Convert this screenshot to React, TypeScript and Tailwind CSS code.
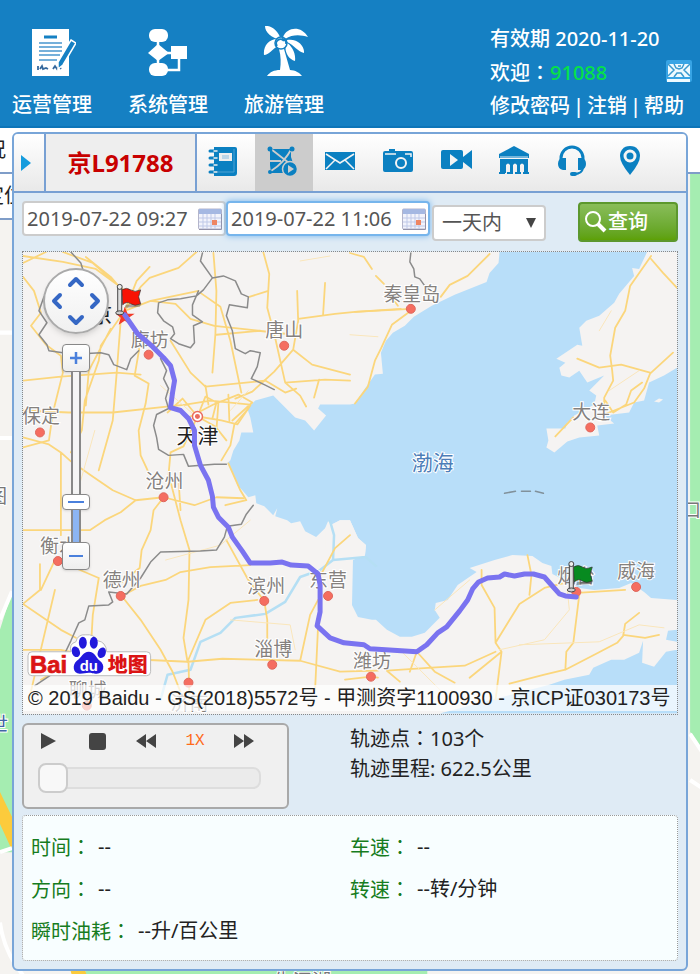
import { useState, type ReactNode } from "react";
import { ChevronDown, ChevronLeft, ChevronRight, ChevronUp } from "lucide-react";

interface City {
    name: string;
    x: number;
    y: number;
    dotX: number;
    dotY: number;
}

const CITIES: City[] = [
    { name: "秦皇岛", x: 412, y: 300, dotX: 411, dotY: 308 },
    { name: "唐山", x: 284, y: 336, dotX: 284, dotY: 345 },
    { name: "廊坊", x: 149, y: 346, dotX: 148, dotY: 354 },
    { name: "保定", x: 40, y: 423, dotX: 39, dotY: 432 },
    { name: "大连", x: 592, y: 419, dotX: 591, dotY: 427 },
    { name: "沧州", x: 164, y: 488, dotX: 163, dotY: 497 },
    { name: "衡水", x: 58, y: 553, dotX: 57, dotY: 561 },
    { name: "德州", x: 121, y: 587, dotX: 120, dotY: 596 },
    { name: "滨州", x: 266, y: 593, dotX: 264, dotY: 601 },
    { name: "东营", x: 328, y: 587, dotX: 328, dotY: 596 },
    { name: "淄博", x: 273, y: 656, dotX: 272, dotY: 665 },
    { name: "潍坊", x: 372, y: 668, dotX: 371, dotY: 677 },
    { name: "烟台", x: 577, y: 583, dotX: 577, dotY: 592 },
    { name: "威海", x: 637, y: 578, dotX: 637, dotY: 587 },
    { name: "聊城", x: 87, y: 697, dotX: 86, dotY: 706 },
    { name: "济南", x: 189, y: 710, dotX: 188, dotY: 683 },
];

const ROADS = [
    "M22 262L45 251M22 255L62 261L95 268L118 285M85 256L110 276L122 290M62 251L92 262L124 290M196 251L178 267L149 277L140 286L124 310",
    "M124 310L136 280L149 266M124 310L150 300L198 290M150 300L175 303L190 318L214 325L285 333M124 310L110 330L100 345L98 360L84 400L81 430L70 452M110 328L88 370L85 405M120 320L116 372L112 420L98 470",
    "M22 276L33 290L40 312L30 325L45 344L60 355L62 372L52 412L48 440L22 447M22 380L60 376L116 372L140 374M22 410L68 412L112 412L166 406L186 404",
    "M140 340L134 375L148 383L145 403L138 430L140 455L147 470M170 340L190 372L205 386L265 380L285 392L296 388M213 252L216 290L215 333L212 372M200 292L220 306L230 340L241 392",
    "M263 251L269 273L267 307L274 333L285 382M297 290L298 320L293 349L274 371L252 391L235 398M293 349L312 364L350 374M325 282L323 314M298 318L335 313L355 311L401 308M216 334L260 330M285 382L300 395L306 406M285 382L325 379L350 380M319 379L314 397M249 296L268 290",
    "M185 404L210 400L250 404M186 418L213 404L238 394L252 402L232 420M197 416L205 396L216 402L212 418M197 416L182 398L167 412M197 416L221 420L237 424L250 405M197 416L183 446L170 452L168 474L180 520L189 550L188 600L183 638L187 662M197 416L215 426L226 440M205 385L208 404M218 402L216 430M228 394L229 420",
    "M22 437L48 444L60 452L70 461L90 475L112 490L135 500L120 512L104 520L89 530L22 530M60 452L60 535M135 500L163 497L194 505L216 497L243 498M163 497L153 510L150 530L141 550L139 568L121 582M178 480L180 510",
    "M248 408L234 424L230 445L221 460M228 463L240 490L246 500L225 505M40 590L54 560L65 564L98 578M39 564L39 590L22 604M54 590L28 700M22 604L60 630L75 638M98 578L92 615L90 650L40 680",
    "M121 596L140 586L165 580L180 572L210 567L250 565M121 596L140 620L160 650L172 672L183 700M187 662L205 620L230 603L257 600M187 662L222 659L300 661L340 672L378 671M22 650L60 650L100 658L187 662M188 662L189 700M264 601L267 620L267 640M264 601L248 580L226 540M300 661L310 615L318 600",
    "M350 252L364 256L372 268M376 275L384 283M318 580L335 548L350 535M355 403L368 386L375 360L381 348L392 324L411 310M386 288L398 305M355 311L411 308M441 296L450 284L468 275L490 253",
    "M652 255L631 285L626 310L616 327L611 355L613 370L614 380L605 397L605 414L635 402L645 388L651 373L674 352M578 358L600 367L622 364L651 372M652 258L664 272L678 287M574 417L556 436M606 400L614 412L627 404L632 390L643 382",
    "M482 570L482 585L495 608L496 643L502 652L496 700M528 555L532 575L530 595M578 593L626 590M496 643L520 604L545 588L578 580M580 595L574 643L567 652L566 670M496 652L465 666L432 668L387 671L400 682M417 652L435 672L455 683M417 652L410 672M502 652L470 678M566 670L597 654L618 643L624 636L626 624L640 613M624 635L646 638L660 635M510 684L545 675L566 670M318 626L315 690M378 678L371 677L345 680",
];

const TRACK = "M124 314L137 333L152 346L163 357L170 365L174 380L172 392L170 407L180 410L188 418L194 430L194 445L200 465L208 480L212 496L213 507L218 517L228 527L232 537L242 551L250 563L270 563L282 562L291 565L308 566L318 574L320 585L320 612L317 626L330 638L344 643L364 645L370 649L417 652L427 645L438 633L447 627L460 611L468 600L473 589L479 582L488 578L500 577L505 574L515 576L525 574L534 574L545 577L553 586L560 594L566 596L577 597";

const BORDERS = "M70 251L80 262L84 275M202 252L200 260L212 277L203 289L196 295L180 298L167 299L158 302L157 312L163 320L172 326L174 333L170 338L178 343L190 347L194 342L193 325L202 321L192 314L192 304L198 290M212 277L223 275L235 280L241 293L248 296L247 307L229 304L226 315L232 330L235 348L245 353L250 350L260 352L257 366L251 378L264 384L274 389M43 296L38 310L46 322L38 334L46 344L48 350L62 352L82 353L100 352L108 354L113 364L126 369L130 358L138 350M160 358L166 370L163 378L168 388L165 398L168 408L156 414L153 425L156 437L158 449L168 455L183 454L188 466L214 464L226 464M411 252L410 261L414 268L415 276L420 278L425 285M34 686L55 672L70 641L78 623L84 620L88 606L108 605L112 602L108 592L126 594L140 578L150 562L160 552L200 551L216 550L224 537L227 526L241 524L246 514L253 505";

function Colon() {
    return <span className="font-['Noto_Sans_CJK_TC',sans-serif]">：</span>;
}

function Flag({ x, y, color }: { x: number; y: number; color: string }) {
    return (
        <g transform={`translate(${x} ${y})`}>
            <path d="M7 21L22 20L24 17L8 18Z" fill="#555" opacity="0.5" />
            <path d="M4 3Q9 0 13 3T23 3L21 10L23 17Q17 20 13 17T5 18Z" fill={color} stroke="#333" strokeWidth="0.7" />
            <path d="M0 1h4v25h-4z" fill="#ddd" stroke="#444" />
            <circle cx="2" cy="0" r="2.5" fill="#eee" stroke="#444" />
            <ellipse cx="2" cy="26" rx="4" ry="2" fill="#ccc" stroke="#444" />
        </g>
    );
}

function RouteMap() {
    return (
        <svg viewBox="22 251 656 463" className="block h-auto w-full bg-[#f5f3f2]" role="img" aria-label="轨迹地图">
            {/* Sea */}
            <path
                fill="#b8def9"
                d="M500 251L499 262L490 272L487 281L455 294L432 305L414 316L405 325L393 332L386 340L381 352L383 373L375 374L363 391L355 403L350 404L320 404L318 408L326 415L314 430L305 420L295 417L283 405L273 395L255 400L247 408L250 417L253 432L241 432L239 440L233 450L230 460L227 463L233 475L237 485L242 490L248 497L255 495L256 503L264 506L273 515L277 508L275 516L287 520L291 523L300 521L305 531L316 537L325 528L328 521L332 524L340 520L350 520L358 538L366 545L365 555L353 560L352 605L358 617L372 620L376 620L387 630L400 637L412 637L425 633L440 618L435 610L436 603L448 600L458 585L477 572L470 568L495 560L513 555L533 556L543 563L552 566L553 574L565 580L580 588L595 590L620 588L632 583L645 592L652 598L678 600V251Z"
            />
            <path
                fill="#f5f3f2"
                d="M648 251L640 268L633 267L635 275L620 293L615 302L600 315L587 320L580 327L583 345L578 344L557 358L566 362L560 367L562 375L570 377L580 370L588 382L605 375L595 385L590 390L597 395L595 404L575 415L568 422L566 428L547 428L549 440L547 447L555 452L568 441L580 437L600 435L598 425L615 423L605 415L630 412L635 402L645 400L650 382L665 375L678 367V251Z"
            />
            <path
                fill="#b8def9"
                d="M678 630L669 631L667 640L678 642V714H440L550 685L565 680L590 675L594 668L612 660L625 660L640 653L644 641L643 663L655 667L667 652L678 650Z"
            />
            <path fill="#f5f3f2" d="M655 401L660 398L664 399L660 402Z" />
            {/* Yellow River mouth */}
            <path fill="#f5f3f2" d="M325 528L340 520H350L358 538L366 545L365 556L345 560L325 550Z" />
            <g fill="none" strokeLinejoin="round" strokeLinecap="round">
                <path d="M160 700L167 675L190 670L200 642L220 633L235 618L265 614L285 602L300 577L320 570L333 560L366 557L376 566M333 560L334 535L330 521" stroke="#b5dff4" strokeWidth="2.5" />
                {ROADS.map((d) => (
                    <path key={d} d={d} stroke="#fbd67c" strokeWidth="1.8" />
                ))}
                <path
                    d="M230 410L248 390M160 385L200 420M300 260L330 255M80 480L94 430M165 560L220 545L250 520M230 620L290 625L295 650M400 650L440 690M500 650L545 640L570 610L568 590M520 645L600 642L640 625L665 628M435 610L470 580M600 330L612 310M610 390L640 370M350 334L378 336"
                    stroke="#fae6bb"
                />
                <path d={BORDERS} stroke="#8b8b8b" strokeWidth="1.5" />
                <path d="M505 493L516 491M522 491L531 491M536 491L544 493" stroke="#81919b" strokeWidth="1.5" />
            </g>
            {/* Cities */}
            {CITIES.map((city) => (
                <g key={city.name}>
                    <circle cx={city.dotX} cy={city.dotY} r="4.5" fill="#f56d60" stroke="#dd665b" />
                    <text
                        x={city.x}
                        y={city.y}
                        textAnchor="middle"
                        fill="#85817e"
                        stroke="#fff"
                        strokeWidth="2"
                        paintOrder="stroke"
                        className="text-[19px]"
                    >
                        {city.name}
                    </text>
                </g>
            ))}
            <circle cx="197" cy="416" r="5" fill="#fff" stroke="#ea6b5e" strokeWidth="1.5" />
            <circle cx="197" cy="416" r="2.5" fill="#ea6b5e" />
            <text x="197" y="443" textAnchor="middle" fill="#222" stroke="#fff" strokeWidth="2" paintOrder="stroke" className="text-[21px]">
                天津
            </text>
            <text x="101" y="321" textAnchor="middle" fill="#222" className="text-[21px]">京</text>
            <text x="433" y="470" textAnchor="middle" fill="#4c7db8" stroke="#fff" strokeWidth="2" paintOrder="stroke" className="text-[21px]">
                渤海
            </text>
            <path d="M124 306l3 7 7 0-6 4 2 7-6-4-6 4 2-7-5-4h7z" fill="#f23a28" />
            <path d={TRACK} fill="none" stroke="#7a73f0" strokeWidth="5" strokeLinejoin="round" strokeLinecap="round" />
            <Flag x={117} y={286} color="#f81304" />
            <Flag x={570} y={564} color="#078a20" />

            {/* Provider logo */}
            <g className="font-['Liberation_Sans','Noto_Sans_CJK_SC',sans-serif]">
                <path
                    d="M31 652h39q-2-8 5-10q2-8 10-7q8-1 12 6q8 1 9 11h40q4 0 4 4v16q0 4-4 4H31q-4 0-4-4v-16q0-4 4-4z"
                    fill="#fff"
                    stroke="#bbb"
                />
                <text x="29" y="673" fill="#db1414" stroke="#db1414" strokeWidth="0.7" fontWeight="bold" className="text-[24px]">Bai</text>
                <g fill="#2219dc">
                    <ellipse cx="82" cy="643" rx="4" ry="6" />
                    <ellipse cx="93" cy="643" rx="4" ry="6" />
                    <ellipse cx="75" cy="652" rx="4" ry="5.5" transform="rotate(-20 75 652)" />
                    <ellipse cx="101" cy="653" rx="4" ry="5.5" transform="rotate(20 101 653)" />
                    <path d="M88 652c6 0 7 6 11 9 6 4 4 13-3 13-4 0-5-1-8-1s-5 1-9 1c-7 0-8-9-3-13 5-3 6-9 12-9z" />
                </g>
                <text x="88" y="671" textAnchor="middle" fill="#fff" fontWeight="bold" className="text-[15px]">du</text>
                <text x="107" y="672" fill="#db1414" fontWeight="900" className="text-[20px]">地图</text>
            </g>
        </svg>
    );
}

function MapControls() {
    const arrow = "absolute grid size-6 place-items-center text-[#3567c4]";
    const square = "grid size-7 shrink-0 place-items-center rounded-sm border border-[#888] bg-gradient-to-b from-white to-[#eee] shadow";
    return (
        <>
            <div className="absolute top-4 left-5 size-[66px] rounded-full border-2 border-[#aaa] bg-gradient-to-b from-white to-[#f0f0f0] shadow-md">
                <button aria-label="向上平移" className={`${arrow} top-0 left-[19px]`}><ChevronUp className="size-6" strokeWidth={4} /></button>
                <button aria-label="向左平移" className={`${arrow} top-[19px] left-0`}><ChevronLeft className="size-6" strokeWidth={4} /></button>
                <button aria-label="向右平移" className={`${arrow} top-[19px] right-0`}><ChevronRight className="size-6" strokeWidth={4} /></button>
                <button aria-label="向下平移" className={`${arrow} bottom-0 left-[19px]`}><ChevronDown className="size-6" strokeWidth={4} /></button>
            </div>
            <div className="absolute top-[92px] left-[39px] flex w-7 flex-col items-center">
                <button aria-label="放大" className={square}>
                    <svg viewBox="0 0 14 14" className="size-[14px]"><path d="M7 1v12M1 7h12" stroke="#4a80dc" strokeWidth="2.5" /></svg>
                </button>
                <div className="h-[122px] w-2.5 border-x-2 border-[#888] bg-[#f5f5f5]" />
                <button aria-label="缩放级别" className="grid h-4 w-7 place-items-center rounded-sm border border-[#888] bg-white shadow">
                    <span className="h-0.5 w-4 bg-[#4a80dc]" />
                </button>
                <div className="h-8 w-2.5 border-x-2 border-[#888] bg-[#8cb5f2]" />
                <button aria-label="缩小" className={square}>
                    <span className="h-0.5 w-3.5 bg-[#4a80dc]" />
                </button>
            </div>
        </>
    );
}

function CalendarIcon() {
    return (
        <svg viewBox="0 0 24 22" className="h-[22px] w-6">
            <rect x="0.5" y="1" width="23" height="20" rx="1" fill="#f2f3fb" stroke="#b4b5cb" />
            <path d="M1 1h22v5H1z" fill="#a5b8e2" />
            <path d="M1 10h22M1 14h22M1 18h22M5 6v15M9 6v15M13 6v15M17 6v15" stroke="#bfc9e8" />
            <path d="M14 12h5v5h-5z" fill="#ee8562" />
            <path d="M1 21.5h22.5V6" fill="none" stroke="#9392a8" />
        </svg>
    );
}

function DateField({ label, defaultValue, focused }: { label: string; defaultValue: string; focused?: boolean }) {
    return (
        <div
            className={`flex h-[35px] w-[204px] items-center rounded border-2 bg-white pr-0.5 pl-[3px] ${focused ? "border-[#76b5ec] shadow-[0_0_6px_#76b5ec]" : "border-[#ccc]"}`}
        >
            <input aria-label={label} defaultValue={defaultValue} className="min-w-0 flex-1 bg-transparent text-xl text-[#555] outline-none" />
            <button aria-label={`选择${label}`}><CalendarIcon /></button>
        </div>
    );
}

const NAV: { label: string; icon: ReactNode }[] = [
    {
        label: "运营管理",
        icon: (
            <svg viewBox="0 0 48 52" className="h-[52px] w-12">
                <path d="M4 3h37v47H4z" fill="#fff" />
                <path d="M16 11h13" stroke="#1580c3" strokeWidth="3" />
                <path d="M11 17h23M11 21h23M11 25h23M11 29h21M11 34h18" stroke="#4a97ce" strokeWidth="1.5" />
                <path d="M10 40v4M12 43l2-3 1 3 3-1 2 1M25 43l2-3 2 3 2-3 2 3" fill="none" stroke="#34689d" strokeWidth="1.8" />
                <path d="M43 14l5 3-13 22-5 4 0-7z" fill="#1580c3" stroke="#fff" strokeWidth="1.5" />
            </svg>
        ),
    },
    {
        label: "系统管理",
        icon: (
            <svg viewBox="0 0 48 52" className="h-[52px] w-12">
                <rect x="5" y="3" width="19" height="13" rx="6" fill="#fff" />
                <path d="M14 18l11 9-11 8-10-8z" fill="#fff" />
                <rect x="5" y="37" width="19" height="13" rx="6" fill="#fff" />
                <path d="M27 20h16v13H27z" fill="#fff" />
                <path d="M14 14v25M22 27h8M35 32v12H22" fill="none" stroke="#fff" strokeWidth="2.5" />
            </svg>
        ),
    },
    {
        label: "旅游管理",
        icon: (
            <svg viewBox="-1 0 48 52" className="h-[52px] w-12">
                <g fill="#fff">
                    <path d="M20 14C18 5 10-1 4 0c0 6 6 12 16 14zM22 11C26 1 40-1 47 11 40 9 32 8 24 13zM18 13C8 12 2 20 3 29c5 0 8-6 14-9zM26 14c10-2 18 6 17 13-6-1-10-8-17-11zM25 18c-2 7 2 15 9 17 1-8-3-15-9-19z" />
                    <path d="M18 23h5c2 7 4 14 6 21 5 0 10 3 12 6H6c3-4 7-6 13-6 1-7 1-14-1-21z" />
                    <circle cx="20" cy="17" r="6" stroke="#1580c3" strokeWidth="1.5" />
                </g>
                <path d="M16 20a4 4 0 0 1 7-5M21 13a4 4 0 0 1 4 5" fill="none" stroke="#1580c3" strokeWidth="2" />
            </svg>
        ),
    },
];

const TOOLS: { label: string; icon: ReactNode }[] = [
    {
        label: "车辆档案",
        icon: (
            <>
                <path d="M6 2h21a2 2 0 0 1 2 2v24a3 3 0 0 1-3 3H6z" />
                <path d="M2 6h4M2 13h4M2 20h4M2 27h4" stroke="#0b80c1" strokeWidth="3" strokeLinecap="round" />
                <path d="M6 6h3M6 13h3M6 20h3M6 27h3" stroke="#eee" strokeWidth="1.5" strokeLinecap="round" />
                <path d="M11 8h13v8H11z" fill="#eee" />
                <path d="M14 11h7M14 13h7" stroke="#88bce0" />
                <path d="M26 4v23H9" fill="none" stroke="#4fa2d3" />
            </>
        ),
    },
    {
        label: "轨迹回放",
        icon: (
            <>
                <path d="M4 4h21v8l2 6v10H5L4 20z" />
                <path d="M5 4q10 8 22 17M5 26Q18 18 26 3M3 16l12 0" fill="none" stroke="#ccc" strokeWidth="1.8" />
                <circle cx="4" cy="4" r="2.5" />
                <circle cx="26" cy="4" r="2.5" />
                <circle cx="4" cy="27" r="2" />
                <circle cx="24" cy="24" r="7.5" stroke="#ccc" strokeWidth="1.5" />
                <path d="M22 20l6 4-6 4z" fill="#ccc" />
            </>
        ),
    },
    {
        label: "短信",
        icon: (
            <>
                <path d="M1 7h30v18H1z" />
                <path d="M2 9l14 9 14-9M2 24l9-9M30 24l-9-9" fill="none" stroke="#f4f4f4" strokeWidth="1.5" />
            </>
        ),
    },
    {
        label: "拍照",
        icon: (
            <>
                <path d="M3 6h4V4h6v2h16q2 0 2 2v17q0 2-2 2H3q-2 0-2-2V8q0-2 2-2z" />
                <circle cx="19" cy="18" r="5" fill="none" stroke="#f4f4f4" strokeWidth="2" />
                <path d="M3 9h11M23 9h6v3" fill="none" stroke="#f4f4f4" strokeWidth="1.5" />
            </>
        ),
    },
    {
        label: "视频",
        icon: (
            <>
                <rect x="1" y="5" width="22" height="19" rx="2" />
                <path d="M23 12l9-7v19l-9-7z" />
                <path d="M10 9l8 6-8 6z" fill="#f4f4f4" />
            </>
        ),
    },
    {
        label: "场馆",
        icon: (
            <>
                <path d="M16 1l15 8v4H1V9z" />
                <path d="M2 14h28v14h-4v-8q-2-3-4 0v8h-3v-8q-2-3-4 0v8h-3v-8q-2-3-4 0v8H2z" />
                <path d="M2 12h28" stroke="#dceaf4" />
                <path d="M1 28h6M9 28h6M17 28h6M25 28h6" stroke="#0b80c1" strokeWidth="2" />
            </>
        ),
    },
    {
        label: "监听",
        icon: (
            <>
                <path d="M5 18v-5a11 11 0 0 1 22 0v5" fill="none" stroke="#0b80c1" strokeWidth="3" />
                <path d="M6 13h4v12H7q-5-1-5-6 0-5 4-6zM22 13h4q4 1 4 6 0 5-5 6h-3z" />
                <path d="M27 23q-1 6-9 6" fill="none" stroke="#0b80c1" strokeWidth="2" />
                <rect x="14" y="27" width="7" height="4" rx="2" />
            </>
        ),
    },
    {
        label: "定位",
        icon: (
            <>
                <path d="M16 1C9 1 6 6 6 11q0 7 10 19 10-12 10-19c0-5-3-10-10-10z" />
                <circle cx="16" cy="11" r="5" fill="#0b80c1" stroke="#f4f4f4" strokeWidth="3" />
            </>
        ),
    },
];

const DETAILS = [
    { label: "时间", value: "--" },
    { label: "车速", value: "--" },
    { label: "方向", value: "--" },
    { label: "转速", value: "--转/分钟" },
    { label: "瞬时油耗", value: "--升/百公里" },
];

function Player() {
    const [position, setPosition] = useState(0);
    return (
        <div className="h-[86px] w-[267px] shrink-0 rounded-md border-2 border-[#a9a9a9] bg-[#f0f0f0] px-3.5 pt-1.5">
            <div className="flex h-5 items-center gap-[29px] text-[#444]">
                <button aria-label="播放"><svg viewBox="0 0 20 20" className="size-5" fill="currentColor"><path d="M3 2l15 8-15 8z" /></svg></button>
                <button aria-label="停止"><svg viewBox="0 0 20 20" className="size-5" fill="currentColor"><rect x="2" y="2" width="17" height="17" rx="3" /></svg></button>
                <button aria-label="减速"><svg viewBox="0 0 20 20" className="size-5" fill="currentColor"><path d="M10 3v14L0 10zM20 3v14l-10-7z" /></svg></button>
                <span className="w-5 text-center font-['Liberation_Mono',monospace] text-base text-[#ff6a1a]">1X</span>
                <button aria-label="加速"><svg viewBox="0 0 20 20" className="size-5" fill="currentColor"><path d="M0 3l10 7-10 7zM10 3l10 7-10 7z" /></svg></button>
            </div>
            <input
                type="range"
                aria-label="播放进度"
                value={position}
                onChange={(e) => setPosition(Number(e.target.value))}
                className="mt-4 block h-[22px] w-[223px] appearance-none rounded-lg border-2 border-[#ddd] bg-[#ebebeb] [&::-webkit-slider-thumb]:-ml-0.5 [&::-webkit-slider-thumb]:size-[30px] [&::-webkit-slider-thumb]:appearance-none [&::-webkit-slider-thumb]:rounded-lg [&::-webkit-slider-thumb]:border-2 [&::-webkit-slider-thumb]:border-[#ccc] [&::-webkit-slider-thumb]:bg-[#f8f8f8]"
            />
        </div>
    );
}

function BackgroundMap() {
    return (
        <div className="absolute inset-0 overflow-hidden">
            <svg viewBox="0 128 700 846" preserveAspectRatio="xMinYMin slice" className="size-full bg-[#f5f3f0]">
                <path d="M688 172h12v578l-12-20zM0 628L12 590V850H0zM85 960h341v14H85z" fill="#a5edb1" />
                <path d="M0 790L12 815V848L0 822zM68 960h14l5 14H72z" fill="#fccb3c" />
                <path d="M0 850L12 846M0 920Q4 950 24 974M0 332h12M0 437h12M0 618L12 590M688 732l12 18M688 778l12 8" fill="none" stroke="#fff" strokeWidth="4" />
                <g fill="#777" stroke="#fff" strokeWidth="2" paintOrder="stroke" className="text-[19px]">
                    <text x="-12" y="502">图</text>
                    <text x="-11" y="729" fill="#4265a5">世</text>
                    <text x="680" y="516">口</text>
                    <text x="273" y="985">生泗湖</text>
                </g>
            </svg>
            {/* List headings behind the panel */}
            <div className="absolute inset-x-0 top-0 h-[46px] border-b-2 border-[#7f9dc8] bg-white">
                <span className="flex h-full w-1.5 items-center justify-end overflow-hidden text-xl whitespace-nowrap">车况</span>
            </div>
            <div className="absolute top-[46px] left-0 flex h-[46px] w-6 items-center justify-end overflow-hidden border-b-2 border-[#7f9dc8] bg-white text-xl whitespace-nowrap">
                定位
            </div>
        </div>
    );
}

export default function App() {
    const [tool, setTool] = useState("轨迹回放");

    return (
        <div className="flex min-h-screen flex-col font-['Noto_Sans','Noto_Sans_CJK_SC',sans-serif] text-[#222]">
            {/* Header */}
            <header className="flex h-32 shrink-0 justify-between border-b-2 border-[#0d75b8] bg-[#1580c3] font-medium text-white">
                <nav className="flex gap-9 pt-[26px] pl-3">
                    {NAV.map((item) => (
                        <a key={item.label} href="#" className="flex flex-col items-center gap-[13px] text-xl leading-7">
                            {item.icon}
                            {item.label}
                        </a>
                    ))}
                </nav>
                <div className="w-[210px] pt-[22px] text-xl leading-[33px]">
                    <div>有效期 2020-11-20</div>
                    <div className="flex items-center">
                        <span>欢迎<Colon /></span>
                        <span className="text-[#05e247]">91088</span>
                        <button aria-label="消息" className="mr-2 ml-auto">
                            <svg viewBox="0 0 26 24" className="h-6 w-[26px]">
                                <rect width="26" height="22" rx="2" fill="#37a4e5" />
                                <path d="M2 4h22v13H2zM1 19h23v3H1z" fill="#eefaff" />
                                <path d="M2 4l6 6-6 6M24 4l-6 6 6 6M8 4l2 4 3 1 3-1 2-4M8 17l3-4h4l3 4M12 6h3" fill="none" stroke="#3999ce" strokeWidth="1.5" />
                            </svg>
                        </button>
                    </div>
                    <div className="flex gap-[3px] whitespace-nowrap">
                        <a href="#">修改密码</a>
                        <span>|</span>
                        <a href="#">注销</a>
                        <span>|</span>
                        <a href="#">帮助</a>
                    </div>
                </div>
            </header>

            <main className="relative flex-1 px-3 pt-1 pb-1.5">
                <BackgroundMap />

                <section className="relative overflow-hidden rounded-md border-2 border-[#78a5d8] bg-[#dfebf5]">
                    {/* Toolbar */}
                    <div className="flex h-[59px] border-b-2 border-[#78a0d3] bg-gradient-to-b from-white to-[#e9e9e9]">
                        <button aria-label="收起" className="grid w-8 place-items-center border-r-2 border-[#78a0d3] pr-1.5">
                            <svg viewBox="0 0 10 16" className="h-4 w-2.5"><path d="M0 0l10 8-10 8z" fill="#159cdd" /></svg>
                        </button>
                        <h1 className="grid w-[151px] place-items-center border-r-2 border-[#78a0d3] bg-[#eee] text-2xl font-bold text-[#c80000]">京L91788</h1>
                        {TOOLS.map((item) => (
                            <button
                                key={item.label}
                                aria-label={item.label}
                                onClick={() => setTool(item.label)}
                                className={`grid w-[58px] place-items-center pr-1 pb-1 ${tool === item.label ? "bg-[#ccc]" : ""}`}
                            >
                                <svg viewBox="0 0 32 32" className="size-8" fill="#0b80c1">{item.icon}</svg>
                            </button>
                        ))}
                    </div>

                    <div className="p-2">
                        {/* Query form */}
                        <form className="flex h-[42px] items-start" onSubmit={(e) => e.preventDefault()}>
                            <DateField label="开始时间" defaultValue="2019-07-22 09:27" />
                            <DateField label="结束时间" defaultValue="2019-07-22 11:06" focused />
                            <div className="relative mt-1 ml-0.5">
                                <select aria-label="时间范围" className="h-9 w-[114px] appearance-none rounded border-2 border-[#ccc] bg-white pl-2 text-xl text-[#555]">
                                    <option>一天内</option>
                                    <option>三天内</option>
                                </select>
                                <svg viewBox="0 0 10 10" className="pointer-events-none absolute top-[13px] right-2.5 size-2.5"><path d="M0 0h10L5 10z" fill="#444" /></svg>
                            </div>
                            <button className="mt-px ml-auto flex h-10 w-[100px] items-center rounded border-2 border-[#5c982e] bg-gradient-to-b from-[#89bd59] to-[#5da005] pl-1 text-xl font-medium text-white">
                                <svg viewBox="0 0 24 24" className="size-6" fill="none" stroke="#fff" strokeWidth="2">
                                    <circle cx="9" cy="9" r="7" />
                                    <path d="M14 14l7 7" strokeWidth="4" />
                                </svg>
                                查询
                            </button>
                        </form>

                        {/* Map */}
                        <div className="relative mt-2 border border-dotted border-[#888]">
                            <RouteMap />
                            <MapControls />
                            <p className="absolute inset-x-0 bottom-[3px] bg-white/70 pl-[5px] font-['Liberation_Sans','Noto_Sans_CJK_SC',sans-serif] text-xl leading-[26px] whitespace-nowrap text-[#222]">
                                © 2019 Baidu - GS(2018)5572号 - 甲测资字1100930 - 京ICP证030173号
                            </p>
                        </div>

                        <div className="mt-2 flex">
                            <Player />
                            <div className="ml-[61px] text-xl leading-[30px]">
                                <div>轨迹点<Colon />103个</div>
                                <div>轨迹里程: 622.5公里</div>
                            </div>
                        </div>

                        {/* Current point */}
                        <dl className="mt-1.5 grid grid-cols-[319px_1fr] rounded border border-dotted border-[#999] bg-[#f8feff] px-2 pt-2.5 pb-2 text-xl leading-[41px]">
                            {DETAILS.map((item) => (
                                <div key={item.label} className="flex gap-[7px]">
                                    <dt className="text-[#167c20]">{item.label}<Colon /></dt>
                                    <dd>{item.value}</dd>
                                </div>
                            ))}
                        </dl>
                    </div>
                </section>
            </main>
        </div>
    );
}
